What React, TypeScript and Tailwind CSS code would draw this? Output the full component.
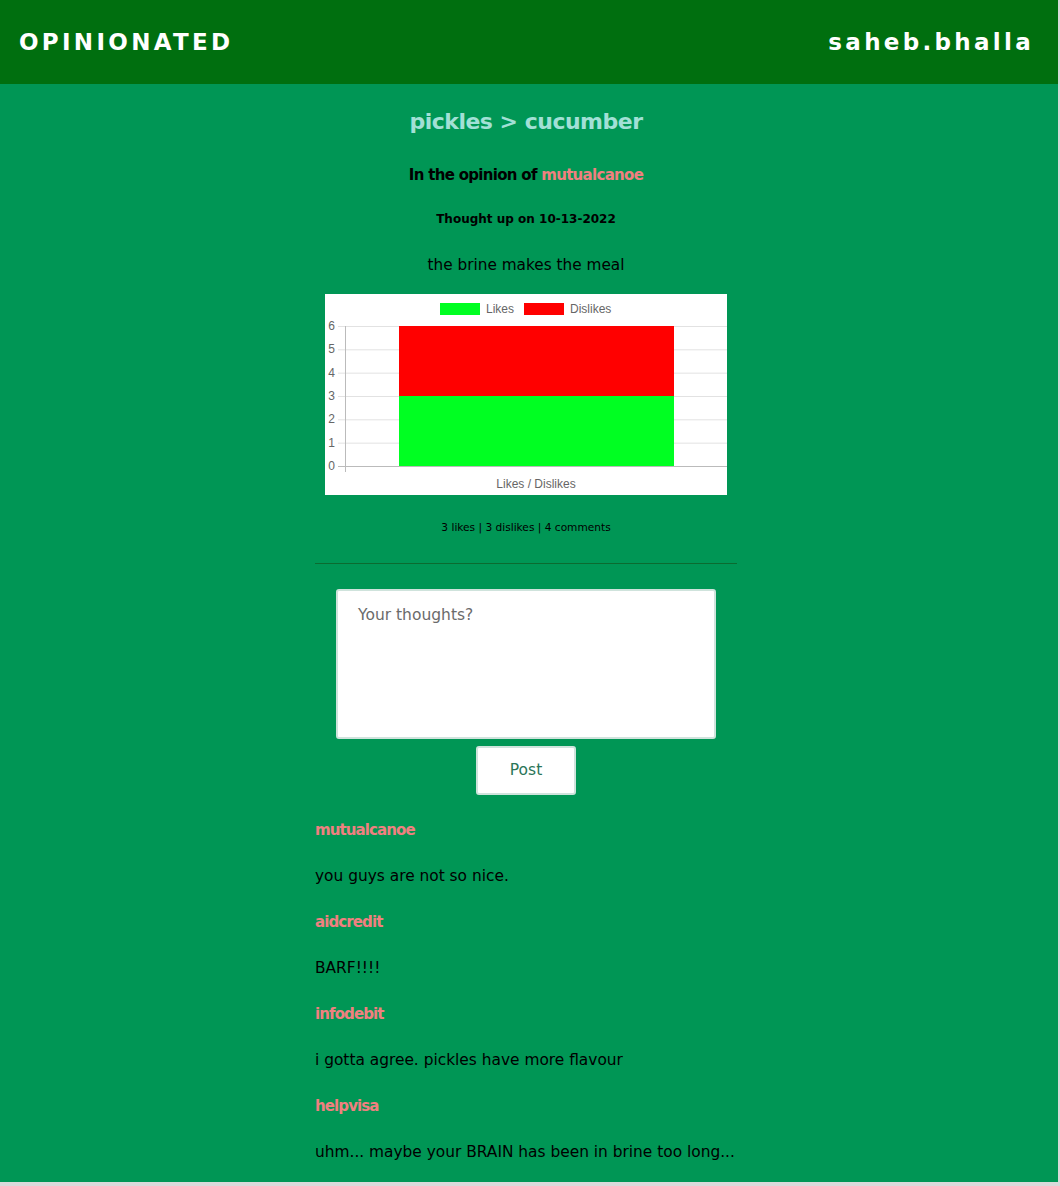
import React from "react";

const font = { fontFamily: '"DejaVu Sans", Verdana, sans-serif' };

function Chart() {
  const top = 32;
  const bottom = 172;
  const step = (bottom - top) / 6;
  const ys = [0, 1, 2, 3, 4, 5, 6].map((v) => bottom - v * step);
  return (
    <svg width="402" height="201" viewBox="0 0 402 201" style={{ fontFamily: '"Liberation Sans", Arial, sans-serif' }}>
      <rect x="115" y="9" width="40" height="12" fill="#00ff22" />
      <text x="161" y="19" fontSize="12" fill="#666">Likes</text>
      <rect x="199" y="9" width="40" height="12" fill="#ff0000" />
      <text x="245" y="19" fontSize="12" fill="#666">Dislikes</text>
      {ys.map((y, i) => (
        <g key={i}>
          <line x1="13" x2="402" y1={y + 0.5} y2={y + 0.5} stroke={i === 0 ? "#bbb" : "#e2e2e2"} strokeWidth="1" />
          <text x="10" y={y + 4} fontSize="12" fill="#666" textAnchor="end">
            {i}
          </text>
        </g>
      ))}
      <line x1="20.5" x2="20.5" y1={top} y2={bottom + 6} stroke="#bbb" strokeWidth="1" />
      <rect x="74" y={bottom - 6 * step} width="275" height={3 * step} fill="#ff0000" />
      <rect x="74" y={bottom - 3 * step} width="275" height={3 * step} fill="#00ff22" />
      <text x="211" y="194" fontSize="12" fill="#666" textAnchor="middle">
        Likes / Dislikes
      </text>
    </svg>
  );
}

const comments = [
  { user: "mutualcanoe", text: "you guys are not so nice." },
  { user: "aidcredit", text: "BARF!!!!" },
  { user: "infodebit", text: "i gotta agree. pickles have more flavour" },
  { user: "helpvisa", text: "uhm... maybe your BRAIN has been in brine too long..." },
];

export default function App() {
  return (
    <div className="min-h-[1186px] w-[1060px] bg-[#dadada]" style={font}>
      <div className="w-[1058px] bg-[#009655]">
        <header className="flex h-[84px] items-center justify-between bg-[#006f0f] pl-[19px] pr-[24px]">
          <div className="text-[23px] font-bold leading-none tracking-[3.3px] text-white">OPINIONATED</div>
          <div className="text-[23px] font-bold leading-none tracking-[3.3px] text-white">saheb.bhalla</div>
        </header>
        <main className="flex flex-col items-center pb-[7px] pr-[6px]">
          <h1 className="mt-[23px] h-[30px] text-[22px] font-bold leading-[30px] tracking-[-0.5px] text-[#a2e0d6]">
            pickles &gt; cucumber
          </h1>
          <p className="mt-[28px] text-[15px] font-bold leading-[20px] tracking-[-0.7px] text-black">
            In the opinion of <span className="text-[#f08080]">mutualcanoe</span>
          </p>
          <p className="mt-[26px] text-[12px] font-bold leading-[16px] text-black">Thought up on 10-13-2022</p>
          <p className="mt-[28px] text-[15.3px] leading-[20px] text-black">the brine makes the meal</p>
          <div className="mt-[19px] h-[201px] w-[402px] bg-white">
            <Chart />
          </div>
          <p className="mt-[25px] text-[10.6px] leading-[14px] text-black">3 likes | 3 dislikes | 4 comments</p>
          <div className="mt-[29px] h-px w-[422px] bg-[#0b6b30]" />
          <textarea
            className="mt-[25px] h-[150px] w-[380px] resize-none rounded-[3px] border-2 border-[#cfe3dc] bg-white px-[20px] py-[14px] text-[15.5px] leading-[20px] text-black outline-none placeholder:text-[#6b6b6b]"
            placeholder="Your thoughts?"
            style={font}
          />
          <button
            className="mt-[7px] h-[49px] w-[100px] rounded-[3px] border-2 border-[#cfe3dc] bg-white text-[15.5px] text-[#2b7558]"
            style={font}
          >
            Post
          </button>
          <div className="mt-[12px] w-[422px]">
            {comments.map((c) => (
              <div key={c.user}>
                <p className="h-[46px] whitespace-nowrap text-[15px] font-bold leading-[46px] tracking-[-0.9px] text-[#f08080]">{c.user}</p>
                <p className="h-[46px] whitespace-nowrap text-[15.4px] leading-[46px] text-black">{c.text}</p>
              </div>
            ))}
          </div>
        </main>
      </div>
    </div>
  );
}
